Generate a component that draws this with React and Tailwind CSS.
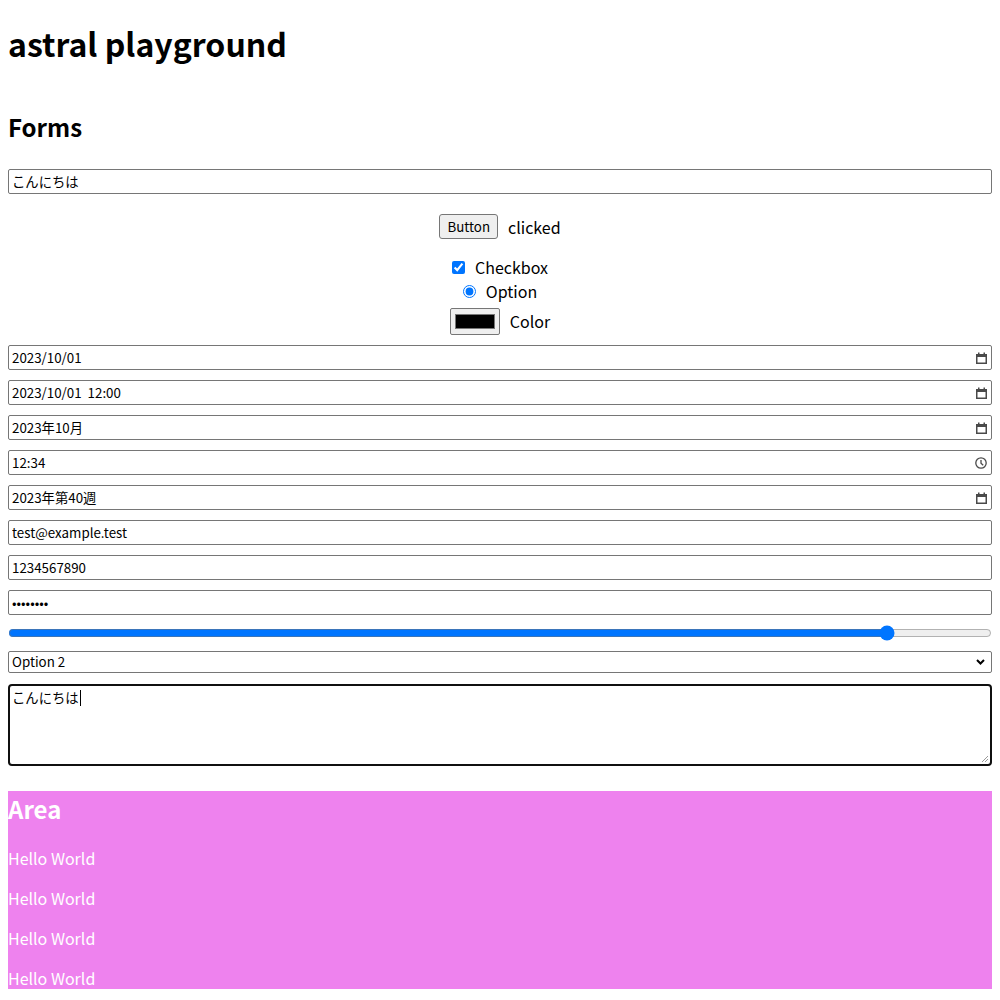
import React from 'react';

const fieldClass =
  'block w-full h-[25px] border border-[#767676] rounded-[2px] px-[3px] text-[13.33px] leading-[23px] text-black bg-white outline-none';

const CalendarIcon = () => (
  <svg width="11" height="12" viewBox="0 0 11 12" className="shrink-0">
    <rect x="0.75" y="2.75" width="9.5" height="8.5" fill="none" stroke="#4a4a4a" strokeWidth="1.5" />
    <rect x="0" y="2" width="11" height="3" fill="#4a4a4a" />
    <rect x="2" y="0.5" width="1.5" height="2" fill="#4a4a4a" />
    <rect x="7.5" y="0.5" width="1.5" height="2" fill="#4a4a4a" />
  </svg>
);

const ClockIcon = () => (
  <svg width="12" height="12" viewBox="0 0 12 12" className="shrink-0">
    <circle cx="6" cy="6" r="5.2" fill="none" stroke="#4a4a4a" strokeWidth="1.3" />
    <path d="M6 3v3.2l2.2 2" fill="none" stroke="#4a4a4a" strokeWidth="1.3" />
  </svg>
);

// date-like fields are drawn as boxes so the ja-JP display text doesn't depend on the browser locale
const PickerField = ({ value, icon }) => (
  <div className="flex h-[25px] items-center justify-between border border-[#767676] rounded-[2px] pl-[3px] pr-[4px] text-[13.33px]">
    <span className="whitespace-pre">{value}</span>
    {icon}
  </div>
);

const App = () => {
  return (
    <div className="min-h-[1000px] bg-white px-2 pt-[20px] font-['Noto_Sans_CJK_JP','Noto_Sans',sans-serif] text-black">
      <h1 className="text-[32px] font-bold leading-[46px]">astral playground</h1>
      <h2 className="mt-[43px] text-[24px] font-bold leading-[35px]">Forms</h2>

      <form className="mt-[25px] flex flex-col" onSubmit={(e) => e.preventDefault()}>
        <input type="text" defaultValue="こんにちは" className={fieldClass} />

        <div className="mt-[20px] flex h-[25px] items-center justify-center gap-2.5">
          <button
            type="button"
            className="h-[25px] border border-[#767676] rounded-[3px] bg-[#efefef] px-[7px] text-[13.33px] leading-[23px]"
          >
            Button
          </button>
          <span className="text-base leading-6">clicked</span>
        </div>

        <label className="mt-[16px] flex h-6 items-center justify-center gap-2.5 text-base">
          <input type="checkbox" defaultChecked className="h-[13px] w-[13px]" />
          <span>Checkbox</span>
        </label>
        <label className="flex h-6 items-center justify-center gap-2.5 text-base">
          <input type="radio" name="opt" defaultChecked className="h-[13px] w-[13px]" />
          <span>Option</span>
        </label>
        <div className="mt-[5px] flex h-[27px] items-center justify-center gap-2.5 text-base leading-6">
          <input
            type="color"
            defaultValue="#000000"
            className="h-[27px] w-[50px] border border-[#767676] rounded-[2px] bg-[#efefef] px-[2px] py-[1px]"
          />
          <span className="-translate-y-px">Color</span>
        </div>

        <div className="mt-[10px] flex flex-col gap-[10px]">
          <PickerField value="2023/10/01" icon={<CalendarIcon />} />
          <PickerField value="2023/10/01  12:00" icon={<CalendarIcon />} />
          <PickerField value="2023年10月" icon={<CalendarIcon />} />
          <PickerField value="12:34" icon={<ClockIcon />} />
          <PickerField value="2023年第40週" icon={<CalendarIcon />} />
          <input type="email" defaultValue="test@example.test" className={fieldClass} />
          <input type="tel" defaultValue="1234567890" className={fieldClass} />
          <input type="password" defaultValue="password" className={fieldClass} />
          <input type="range" min="0" max="100" defaultValue="90" className="block h-4 w-full" />
        </div>

        <div className="mt-[10px] flex h-[22px] items-center justify-between border border-[#767676] rounded-[2px] pl-[3px] pr-[6px] text-[13.33px]">
          <span>Option 2</span>
          <svg width="9" height="6" viewBox="0 0 9 6">
            <path d="M1 1l3.5 3.5L8 1" fill="none" stroke="#000" strokeWidth="2" />
          </svg>
        </div>

        <div className="relative mt-[11px] h-[82px] border-2 border-[#101010] rounded-[4px] px-[2px] py-[1px] text-[13.33px] leading-[19px]">
          <span>こんにちは</span>
          <span className="ml-px inline-block h-[16px] w-px translate-y-[3px] bg-black" />
          <svg width="9" height="9" viewBox="0 0 9 9" className="absolute bottom-[1px] right-[1px]">
            <path d="M8 2L2 8M8 5L5 8" stroke="#9a9a9a" strokeWidth="1" />
          </svg>
        </div>
      </form>

      <div className="mt-[25px] h-[198px] overflow-hidden bg-[#ee82ee] text-white">
        <h2 className="text-[24px] font-bold leading-[35px]">Area</h2>
        <div className="mt-5 flex flex-col gap-4">
          {Array.from({ length: 4 }).map((_, i) => (
            <p key={i} className="text-base leading-6">
              Hello World
            </p>
          ))}
        </div>
      </div>
    </div>
  );
};

export default App;
